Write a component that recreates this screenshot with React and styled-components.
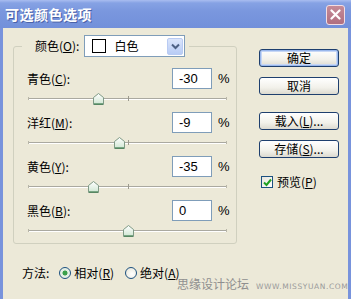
import styled, { createGlobalStyle } from "styled-components";

const GlobalStyle = createGlobalStyle`
  html, body {
    margin: 0;
    padding: 0;
    background: #ece9d8;
  }
  body {
    font-family: "Noto Sans CJK SC", "Liberation Sans", sans-serif;
    font-size: 12px;
    color: #000;
  }
`;

const channels = [
  { name: "青色", key: "C", value: -30 },
  { name: "洋红", key: "M", value: -9 },
  { name: "黄色", key: "Y", value: -35 },
  { name: "黑色", key: "B", value: 0 },
];

export default function App() {
  return (
    <>
      <GlobalStyle />
      <Window>
        <TitleBar>
          <Title>可选颜色选项</Title>
          <CloseButton aria-label="关闭">
            <svg width="11" height="11" viewBox="0 0 11 11">
              <path d="M1.5 1.5 L9.5 9.5 M9.5 1.5 L1.5 9.5" stroke="#fff" strokeWidth="2.2" strokeLinecap="round" />
            </svg>
          </CloseButton>
        </TitleBar>
        <Frame>
          <Body>
            <LeftColumn>
              <Group>
                <Legend>
                  <LegendInner>
                    <Label>
                      颜色(<u>O</u>):
                    </Label>
                    <Select>
                      <Swatch />
                      <SelectText>白色</SelectText>
                      <SelectArrow>
                        <svg width="9" height="7" viewBox="0 0 9 7">
                          <path d="M1 1.5 L4.5 5 L8 1.5" fill="none" stroke="#4d6185" strokeWidth="2" />
                        </svg>
                      </SelectArrow>
                    </Select>
                  </LegendInner>
                </Legend>
                <Rows>
                  {channels.map((c) => (
                    <Channel key={c.key}>
                      <ValueLine>
                        <Label>
                          {c.name}(<u>{c.key}</u>):
                        </Label>
                        <ValueBox>
                          <NumberField>{c.value}</NumberField>
                          <Percent>%</Percent>
                        </ValueBox>
                      </ValueLine>
                      <Slider>
                        <Track />
                        <CenterTick />
                        <Thumb style={{ left: `${((c.value + 100) / 200) * 100}%` }}>
                          <svg width="11" height="12" viewBox="0 0 11 12">
                            <defs>
                              <linearGradient id={`tg${c.key}`} x1="0" y1="0" x2="0" y2="1">
                                <stop offset="0" stopColor="#ffffff" />
                                <stop offset="1" stopColor="#cfe6d2" />
                              </linearGradient>
                            </defs>
                            <path
                              d="M0.5 4.5 L5.5 0.5 L10.5 4.5 L10.5 11.5 L0.5 11.5 Z"
                              fill={`url(#tg${c.key})`}
                              stroke="#7f9a86"
                            />
                            <path d="M1 11 L10 11" stroke="#3c7a4c" strokeWidth="1.2" />
                          </svg>
                        </Thumb>
                      </Slider>
                    </Channel>
                  ))}
                </Rows>
              </Group>
              <MethodRow>
                <span>方法:</span>
                <Radio checked $gap={10} />
                <RadioText>
                  相对(<u>R</u>)
                </RadioText>
                <Radio $gap={11} />
                <RadioText>
                  绝对(<u>A</u>)
                </RadioText>
              </MethodRow>
            </LeftColumn>
            <RightColumn>
              <Button $default>确定</Button>
              <Button>取消</Button>
              <Button $top={17}>
                载入(<u>L</u>)...
              </Button>
              <Button>
                存储(<u>S</u>)...
              </Button>
              <CheckRow>
                <CheckBox>
                  <svg width="9" height="9" viewBox="0 0 9 9">
                    <path d="M1 4.5 L3.5 7 L8 1.5" fill="none" stroke="#21a121" strokeWidth="2" />
                  </svg>
                </CheckBox>
                <span>
                  预览(<u>P</u>)
                </span>
              </CheckRow>
            </RightColumn>
          </Body>
          <Watermark>
            <WatermarkCn>思缘设计论坛</WatermarkCn>
            <WatermarkUrl>WWW.MISSYUAN.COM</WatermarkUrl>
          </Watermark>
        </Frame>
      </Window>
    </>
  );
}

const Window = styled.div`
  width: 351px;
  height: 299px;
  display: flex;
  flex-direction: column;
  overflow: hidden;
`;

const TitleBar = styled.div`
  height: 28px;
  flex: none;
  display: flex;
  align-items: center;
  justify-content: space-between;
  padding: 0 6px 0 5px;
  box-sizing: border-box;
  background: linear-gradient(#a9bdf0 0, #86a2e4 3px, #7a97de 40%, #7290da 100%);
`;

const Title = styled.div`
  color: #fff;
  font-weight: bold;
  font-size: 14px;
  letter-spacing: 0.5px;
  text-shadow: 1px 1px 0 #4a62a8;
  line-height: 1;
`;

const CloseButton = styled.div`
  width: 17px;
  height: 18px;
  margin-top: 1px;
  border: 1px solid #f3dde2;
  border-radius: 3px;
  background: linear-gradient(#c58b98, #b06f80);
  display: flex;
  align-items: center;
  justify-content: center;
`;

const Frame = styled.div`
  flex: 1;
  position: relative;
  border-left: 3px solid #7893dc;
  border-right: 3px solid #7893dc;
  background: #ece9d8;
`;

const Body = styled.div`
  display: flex;
  padding: 7px 0 0 10px;
`;

const LeftColumn = styled.div`
  display: flex;
  flex-direction: column;
  width: 224px;
`;

const Group = styled.fieldset`
  margin: 0;
  padding: 0 8px 0 8px;
  width: 224px;
  height: 209px;
  box-sizing: border-box;
  border: 1px solid #d0d0bf;
  border-radius: 3px;
  min-width: 0;
`;

const Legend = styled.legend`
  padding: 0 4px 0 13px;
`;

const LegendInner = styled.div`
  display: flex;
  align-items: center;
  gap: 5px;
  height: 22px;
`;

const Label = styled.span`
  line-height: 14px;
  white-space: nowrap;
`;

const Select = styled.div`
  width: 101px;
  height: 22px;
  box-sizing: border-box;
  border: 1px solid #7f9db9;
  background: #fff;
  display: flex;
  align-items: center;
  padding: 0 1px 0 7px;
`;

const Swatch = styled.div`
  width: 14px;
  height: 14px;
  box-sizing: border-box;
  border: 1px solid #000;
  background: #fff;
`;

const SelectText = styled.span`
  margin-left: 8px;
  flex: 1;
  line-height: 14px;
`;

const SelectArrow = styled.div`
  width: 16px;
  height: 17px;
  box-sizing: border-box;
  border: 1px solid #b9cbf3;
  border-radius: 2px;
  background: linear-gradient(#dbe5fb, #b8ccf5);
  display: flex;
  align-items: center;
  justify-content: center;
`;

const Rows = styled.div`
  display: flex;
  flex-direction: column;
  padding: 11px 0 0 5px;
`;

const Channel = styled.div`
  display: flex;
  flex-direction: column;
`;

const ValueLine = styled.div`
  display: flex;
  align-items: center;
  justify-content: space-between;
  height: 21px;
`;

const ValueBox = styled.div`
  display: flex;
  align-items: center;
  gap: 6px;
`;

const NumberField = styled.div`
  width: 40px;
  height: 21px;
  box-sizing: border-box;
  border: 1px solid #7f9db9;
  background: #fff;
  padding-left: 6px;
  font-family: "Liberation Sans", "DejaVu Sans", sans-serif;
  font-size: 13px;
  line-height: 19px;
`;

const Percent = styled.span`
  font-family: "Liberation Sans", sans-serif;
  font-size: 13px;
  width: 10px;
`;

const Slider = styled.div`
  position: relative;
  height: 23px;
  margin-left: 1px;
  width: 199px;
`;

const Track = styled.div`
  position: absolute;
  left: 0;
  right: 0;
  top: 9px;
  height: 0;
  border-top: 1px solid #aaa9a0;
  border-bottom: 1px solid #ffffff;
  &::before,
  &::after {
    content: "";
    position: absolute;
    top: -2px;
    width: 1px;
    height: 3px;
    background: #b8b6a8;
  }
  &::before {
    left: 0;
  }
  &::after {
    right: 0;
  }
`;

const CenterTick = styled.div`
  position: absolute;
  left: 50%;
  top: 7px;
  width: 1px;
  height: 5px;
  background: #9c9a8e;
`;

const Thumb = styled.div`
  position: absolute;
  top: 4px;
  width: 11px;
  height: 12px;
  margin-left: -5px;
  display: flex;
`;

const MethodRow = styled.div`
  display: flex;
  align-items: center;
  margin-top: 21px;
  padding-left: 9px;
  height: 16px;
  line-height: 14px;
`;

const Radio = styled.div`
  width: 12px;
  height: 12px;
  box-sizing: border-box;
  border-radius: 50%;
  border: 1px solid #1c5180;
  background: ${({ checked }) =>
    checked
      ? "radial-gradient(circle, #3aa04a 0, #3aa04a 2.2px, #dfeee0 2.8px, #f4f4ee 100%)"
      : "radial-gradient(circle at 60% 60%, #ffffff 0, #f0efe6 60%, #d8d6ca 100%)"};
  margin-left: ${({ $gap }) => $gap}px;
  margin-right: 3px;
`;

const RadioText = styled.span`
  white-space: nowrap;
`;

const RightColumn = styled.div`
  display: flex;
  flex-direction: column;
  gap: 10px;
  padding-top: 14px;
  margin-left: 22px;
`;

const Button = styled.div`
  width: 80px;
  height: 18px;
  box-sizing: border-box;
  border: 1px solid #1e3f6e;
  border-radius: 3px;
  background: linear-gradient(#ffffff, #f2f1ea 60%, #dcdad0);
  box-shadow: ${({ $default }) => ($default ? "inset 0 0 0 1px #9ab8ec, inset 0 0 0 2px #c7d7f5" : "none")};
  display: flex;
  align-items: center;
  justify-content: center;
  line-height: 14px;
  margin-top: ${({ $top }) => ($top ? `${$top - 10}px` : "0")};
`;

const CheckRow = styled.div`
  display: flex;
  align-items: center;
  gap: 4px;
  margin-top: 7px;
  padding-left: 2px;
  line-height: 14px;
`;

const CheckBox = styled.div`
  width: 12px;
  height: 12px;
  box-sizing: border-box;
  border: 1px solid #1c5180;
  background: linear-gradient(135deg, #e8e6dc, #ffffff);
  display: flex;
  align-items: center;
  justify-content: center;
`;

const Watermark = styled.div`
  position: absolute;
  left: 174px;
  top: 248px;
  display: flex;
  align-items: baseline;
  gap: 7px;
  white-space: nowrap;
  pointer-events: none;
`;

const WatermarkCn = styled.span`
  color: #8f8f8f;
  font-size: 12px;
  line-height: 16px;
`;

const WatermarkUrl = styled.span`
  color: #9a9a9a;
  font-family: "DejaVu Sans", sans-serif;
  font-size: 7.5px;
  letter-spacing: 0.6px;
`;
